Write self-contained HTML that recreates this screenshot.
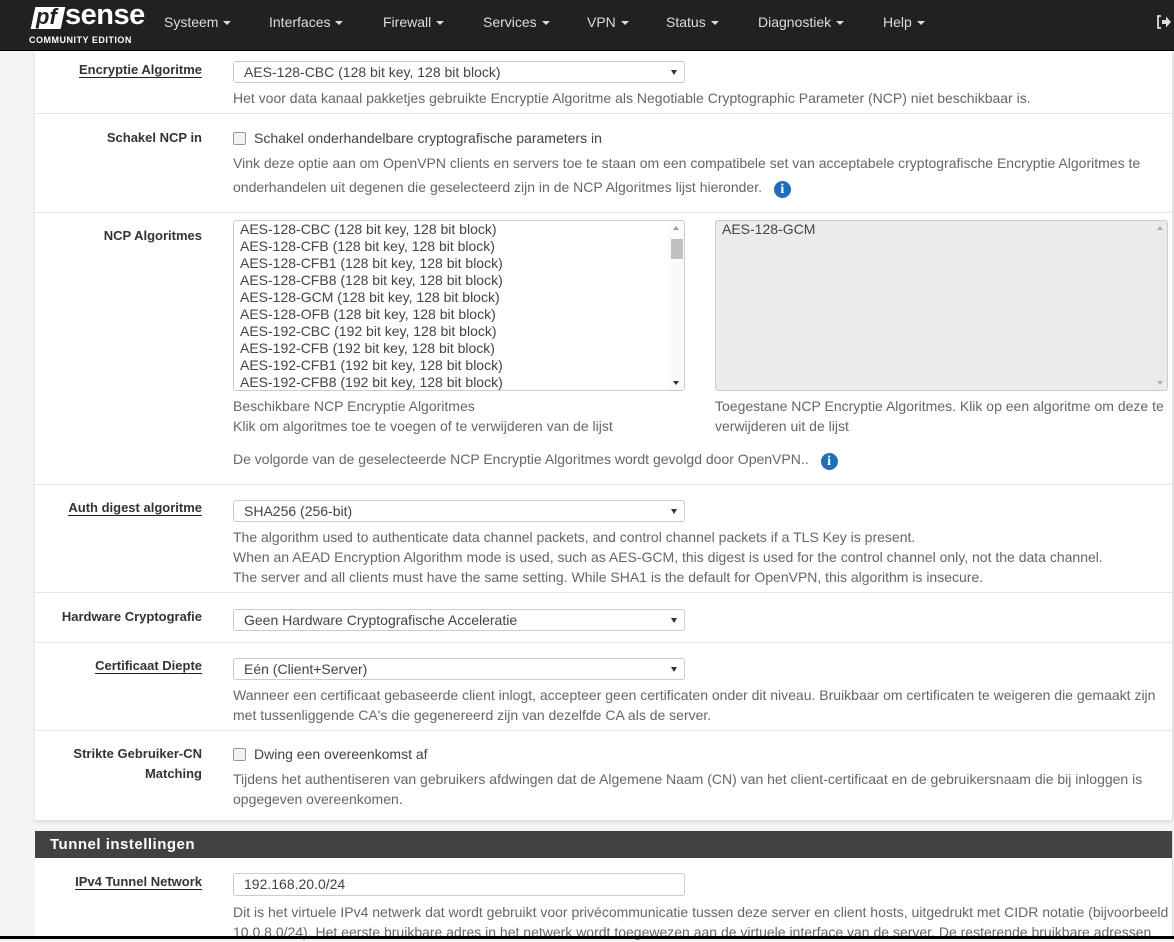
<!DOCTYPE html><html><head><style>
body{margin:0;background:#f3f3f3;font-family:"Liberation Sans",sans-serif;font-size:14px;color:#555;width:1174px;height:939px;overflow:hidden;position:relative}
.nav{position:absolute;left:0;top:0;width:1174px;height:50px;background:#212121;border-bottom:1px solid #000}
.nav .m{position:absolute;top:14px;color:#ddd;font-size:14px}
.car{display:inline-block;border-left:4px solid transparent;border-right:4px solid transparent;border-top:4px solid #ddd;vertical-align:middle;margin-left:5px}
.panel{position:absolute;left:35px;width:1137px;background:#fff;border-right:1px solid #ddd}
.row{position:absolute;left:0;width:1137px;border-bottom:1px solid #e5e5e5}
.lab{position:absolute;right:970px;width:160px;text-align:right;font-weight:bold;color:#333;font-size:13px;line-height:20px}
.u{border-bottom:1.5px solid #222}
.sel{position:absolute;left:198px;width:452px;height:22px;border:1px solid #ccc;border-radius:3px;box-sizing:border-box;padding:2px 10px;color:#444;font-size:14px;line-height:16px;background:#fff}
.sel:after{content:"";position:absolute;right:7px;top:8px;border-left:3.5px solid transparent;border-right:3.5px solid transparent;border-top:5px solid #333}
.nsel:after{display:none}
.h{position:absolute;left:198px;line-height:20px;color:#666;font-size:14px}
.cb{display:inline-block;width:11px;height:11px;border:1px solid #999;border-radius:2px;background:#f2f2f2;vertical-align:-2px;margin-right:8px}
.info{display:inline-block;width:17px;height:17px;border-radius:50%;background:#1e6fb8;color:#fff;font-weight:bold;font-family:"Liberation Serif",serif;text-align:center;line-height:17px;font-size:14px;vertical-align:-1px;margin-left:8px}
</style></head><body>
<div class="nav">
<div style="position:absolute;left:31px;top:6px;width:110px;height:26px">
<div style="position:absolute;left:2px;top:1px;width:30px;height:22px;background:#fff;transform:skewX(-12deg)"></div>
<div style="position:absolute;left:5px;top:-2px;font:italic bold 22px 'Liberation Sans';color:#212121">pf</div>
<div style="position:absolute;left:34px;top:-7px;font:bold 29px 'Liberation Sans';color:#fff;letter-spacing:-0.5px">sense</div>
</div>
<div style="position:absolute;left:29px;top:35px;font:bold 9px 'Liberation Sans';color:#fff;letter-spacing:0.5px">COMMUNITY EDITION</div>
<span class="m" style="left:164px">Systeem<span class="car"></span></span>
<span class="m" style="left:269px">Interfaces<span class="car"></span></span>
<span class="m" style="left:383px">Firewall<span class="car"></span></span>
<span class="m" style="left:483px">Services<span class="car"></span></span>
<span class="m" style="left:587px">VPN<span class="car"></span></span>
<span class="m" style="left:666px">Status<span class="car"></span></span>
<span class="m" style="left:758px">Diagnostiek<span class="car"></span></span>
<span class="m" style="left:883px">Help<span class="car"></span></span>
<svg style="position:absolute;left:1156px;top:14px" width="16" height="16" viewBox="0 0 16 16"><path d="M5 2H2v12h3" fill="none" stroke="#ddd" stroke-width="1.8"/><path d="M6 6h4V2.5L15 8l-5 5.5V10H6z" fill="#ddd"/></svg>
</div>

<div class="panel" style="top:51px;height:769px;box-shadow:0 2px 3px rgba(0,0,0,.1)">
<div class="row" style="top:0;height:62px">
<div class="lab" style="top:9px"><span class="u">Encryptie Algoritme</span></div>
<div class="sel" style="top:10px">AES-128-CBC (128 bit key, 128 bit block)</div>
<div class="h" style="top:37px">Het voor data kanaal pakketjes gebruikte Encryptie Algoritme als Negotiable Cryptographic Parameter (NCP) niet beschikbaar is.</div>
</div>
<div class="row" style="top:62px;height:99px">
<div class="lab" style="top:15px">Schakel NCP in</div>
<div class="h" style="top:15px;color:#444"><span class="cb"></span>Schakel onderhandelbare cryptografische parameters in</div>
<div class="h" style="top:38px;line-height:24px;width:920px">Vink deze optie aan om OpenVPN clients en servers toe te staan om een compatibele set van acceptabele cryptografische Encryptie Algoritmes te onderhandelen uit degenen die geselecteerd zijn in de NCP Algoritmes lijst hieronder. <span class="info">i</span></div>
</div>
<div class="row" style="top:161px;height:272px">
<div class="lab" style="top:14px">NCP Algoritmes</div>
<div style="position:absolute;left:198px;top:8px;width:452px;height:171px;border:1px solid #ccc;border-radius:3px;box-sizing:border-box;overflow:hidden;color:#444;line-height:17px;padding:0 0 0 6px">
AES-128-CBC (128 bit key, 128 bit block)<br>AES-128-CFB (128 bit key, 128 bit block)<br>AES-128-CFB1 (128 bit key, 128 bit block)<br>AES-128-CFB8 (128 bit key, 128 bit block)<br>AES-128-GCM (128 bit key, 128 bit block)<br>AES-128-OFB (128 bit key, 128 bit block)<br>AES-192-CBC (192 bit key, 128 bit block)<br>AES-192-CFB (192 bit key, 128 bit block)<br>AES-192-CFB1 (192 bit key, 128 bit block)<br>AES-192-CFB8 (192 bit key, 128 bit block)
<div style="position:absolute;right:0;top:0;width:15px;height:169px;background:#fafafa"><div style="position:absolute;left:4px;top:5px;border-left:3px solid transparent;border-right:3px solid transparent;border-bottom:4px solid #999"></div><div style="position:absolute;left:2px;top:18px;width:12px;height:20px;background:#c1c1c1"></div><div style="position:absolute;left:4px;bottom:5px;border-left:3px solid transparent;border-right:3px solid transparent;border-top:4px solid #333"></div></div>
</div>
<div style="position:absolute;left:680px;top:8px;width:453px;height:171px;border:1px solid #ccc;border-radius:3px;box-sizing:border-box;background:#ebebeb;color:#444;padding:0 6px;line-height:17px">AES-128-GCM<div style="position:absolute;right:4px;top:5px;border-left:3px solid transparent;border-right:3px solid transparent;border-bottom:4px solid #aaa"></div><div style="position:absolute;right:4px;bottom:5px;border-left:3px solid transparent;border-right:3px solid transparent;border-top:4px solid #aaa"></div></div>
<div class="h" style="top:184px">Beschikbare NCP Encryptie Algoritmes<br>Klik om algoritmes toe te voegen of te verwijderen van de lijst</div>
<div class="h" style="left:680px;top:184px;width:455px">Toegestane NCP Encryptie Algoritmes. Klik op een algoritme om deze te verwijderen uit de lijst</div>
<div class="h" style="top:237px">De volgorde van de geselecteerde NCP Encryptie Algoritmes wordt gevolgd door OpenVPN.. <span class="info">i</span></div>
</div>
<div class="row" style="top:433px;height:108px">
<div class="lab" style="top:14px"><span class="u">Auth digest algoritme</span></div>
<div class="sel" style="top:16px">SHA256 (256-bit)</div>
<div class="h" style="top:43px">The algorithm used to authenticate data channel packets, and control channel packets if a TLS Key is present.<br>When an AEAD Encryption Algorithm mode is used, such as AES-GCM, this digest is used for the control channel only, not the data channel.<br>The server and all clients must have the same setting. While SHA1 is the default for OpenVPN, this algorithm is insecure.</div>
</div>
<div class="row" style="top:541px;height:50px">
<div class="lab" style="top:15px">Hardware Cryptografie</div>
<div class="sel" style="top:17px">Geen Hardware Cryptografische Acceleratie</div>
</div>
<div class="row" style="top:591px;height:88px">
<div class="lab" style="top:14px"><span class="u">Certificaat Diepte</span></div>
<div class="sel" style="top:16px">Eén (Client+Server)</div>
<div class="h" style="top:43px;width:930px">Wanneer een certificaat gebaseerde client inlogt, accepteer geen certificaten onder dit niveau. Bruikbaar om certificaten te weigeren die gemaakt zijn met tussenliggende CA's die gegenereerd zijn van dezelfde CA als de server.</div>
</div>
<div class="row" style="top:679px;height:90px;border:none">
<div class="lab" style="top:14px">Strikte Gebruiker-CN Matching</div>
<div class="h" style="top:14px;color:#444"><span class="cb"></span>Dwing een overeenkomst af</div>
<div class="h" style="top:39px;width:930px">Tijdens het authentiseren van gebruikers afdwingen dat de Algemene Naam (CN) van het client-certificaat en de gebruikersnaam die bij inloggen is opgegeven overeenkomen.</div>
</div>
</div>

<div class="panel" style="top:831px;height:108px">
<div style="height:27px;background:#424242;color:#fff;font-weight:bold;font-size:15px;line-height:27px;padding-left:15px;letter-spacing:0.5px">Tunnel instellingen</div>
<div class="lab" style="top:41px"><span class="u">IPv4 Tunnel Network</span></div>
<div class="sel nsel" style="top:42px;height:23px">192.168.20.0/24</div>
<div class="h" style="top:71px;width:940px">Dit is het virtuele IPv4 netwerk dat wordt gebruikt voor privécommunicatie tussen deze server en client hosts, uitgedrukt met CIDR notatie (bijvoorbeeld 10.0.8.0/24). Het eerste bruikbare adres in het netwerk wordt toegewezen aan de virtuele interface van de server. De resterende bruikbare adressen</div>
</div>
<div style="position:absolute;left:0;top:936px;width:1174px;height:3px;background:#000"></div>
</body></html>
